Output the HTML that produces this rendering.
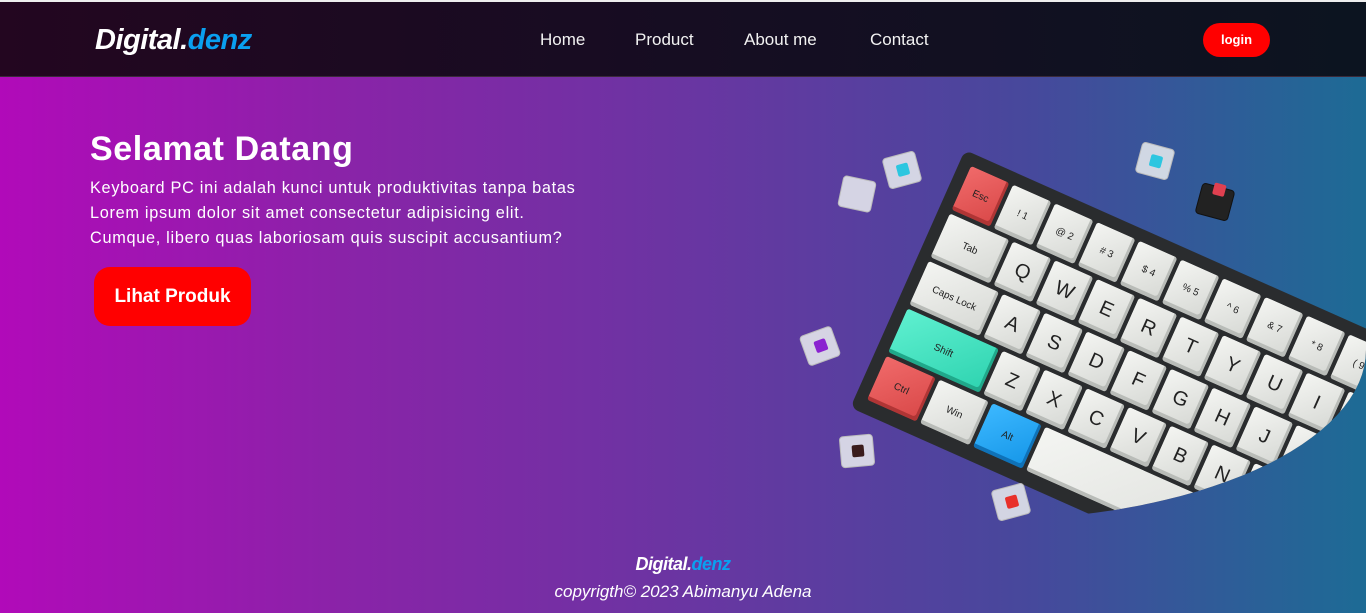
<!DOCTYPE html>
<html><head><meta charset="utf-8"><style>
*{margin:0;padding:0;box-sizing:border-box}
html{width:1366px;height:613px;overflow:hidden}
body{width:1366px;height:613px;overflow:hidden;font-family:"Liberation Sans",sans-serif;color:#fff;position:relative;
background:linear-gradient(90deg,#b10ab9 0%,#8a23a8 25%,#6a35a2 50%,#47489c 75%,#1d6b95 100%);border-top:2px solid #eee}
nav{position:absolute;left:0;top:0;width:1366px;height:75px;background:linear-gradient(90deg,#230620,#160d22 50%,#0c1420);border-bottom:1px solid #3a2a3a}
.logo{position:absolute;font-weight:bold;font-style:italic;letter-spacing:-0.5px}
.logo span{color:#0aa0f0}
.nl{position:absolute;top:28px;font-size:17px;color:#f2f2f2}
.login{position:absolute;left:1203px;top:21px;width:67px;height:34px;border-radius:17px;background:#ff0000;font-weight:bold;font-size:13px;text-align:center;line-height:34px}
h1{position:absolute;left:90px;top:128px;font-size:34px;font-weight:bold;letter-spacing:0.6px}
p.d{position:absolute;left:90px;top:174px;font-size:16.3px;line-height:25px;letter-spacing:0.7px;white-space:nowrap}
.btn{position:absolute;left:94px;top:265px;width:157px;height:59px;border-radius:16px;background:#ff0000;font-weight:bold;font-size:19px;text-align:center;line-height:59px}
.wrap{position:absolute;left:780px;top:100px;width:586px;height:418px;overflow:hidden;border-bottom-right-radius:380px 170px}
.case{position:absolute;left:185px;top:48px;width:720px;height:282px;background:#2a2c2e;border-radius:8px;transform:rotate(24deg);transform-origin:0 0;padding:10px}
.row{display:flex;height:52px}
.k{width:46px;height:52px;border:2px solid #2a2c2e;border-radius:5px;background:linear-gradient(135deg,#f4f5f2,#d6d8d4);color:#222;font-size:20px;display:flex;align-items:center;justify-content:center;box-shadow:inset -3px -4px 0 #b9bcb8}
.s{font-size:10px}
.r{background:linear-gradient(135deg,#f06a6a,#d94848);box-shadow:inset -3px -4px 0 #b03535}
.t{background:linear-gradient(135deg,#5ff0d0,#2ed3b0);box-shadow:inset -3px -4px 0 #20a88a}
.b{background:linear-gradient(135deg,#3cb8ff,#1596e8);box-shadow:inset -3px -4px 0 #0f72b8}
.sw{position:absolute;width:34px;height:32px;background:rgba(235,238,240,.85);border:1px solid #bbb;border-radius:4px}
.sw i{position:absolute;left:11px;top:9px;width:12px;height:12px;border-radius:2px}
.f1{position:absolute;left:0;width:1366px;text-align:center;top:552px;font-size:18px}
.f2{position:absolute;left:0;width:1366px;text-align:center;top:580px;font-size:17px;font-style:italic}
</style></head><body>
<nav>
<div class="logo" style="left:95px;top:22px;font-size:29px">Digital.<span>denz</span></div>
<div class="nl" style="left:540px">Home</div>
<div class="nl" style="left:635px">Product</div>
<div class="nl" style="left:744px">About me</div>
<div class="nl" style="left:870px">Contact</div>
<div class="login">login</div>
</nav>
<h1>Selamat Datang</h1>
<p class="d">Keyboard PC ini adalah kunci untuk produktivitas tanpa batas<br>Lorem ipsum dolor sit amet consectetur adipisicing elit.<br>Cumque, libero quas laboriosam quis suscipit accusantium?</p>
<div class="btn">Lihat Produk</div>
<div class="wrap">
<div class="case">
<div class="row"><div class="k r s">Esc</div><div class="k s">! 1</div><div class="k s">@ 2</div><div class="k s"># 3</div><div class="k s">$ 4</div><div class="k s">% 5</div><div class="k s">^ 6</div><div class="k s">&amp; 7</div><div class="k s">* 8</div><div class="k s">( 9</div><div class="k s">) 0</div><div class="k"></div><div class="k"></div><div class="k"></div></div>
<div class="row"><div class="k s" style="width:69px">Tab</div><div class="k">Q</div><div class="k">W</div><div class="k">E</div><div class="k">R</div><div class="k">T</div><div class="k">Y</div><div class="k">U</div><div class="k">I</div><div class="k">O</div><div class="k">P</div><div class="k"></div><div class="k"></div></div>
<div class="row"><div class="k s" style="width:81px">Caps Lock</div><div class="k">A</div><div class="k">S</div><div class="k">D</div><div class="k">F</div><div class="k">G</div><div class="k">H</div><div class="k">J</div><div class="k">K</div><div class="k">L</div><div class="k"></div><div class="k"></div></div>
<div class="row"><div class="k t s" style="width:104px">Shift</div><div class="k">Z</div><div class="k">X</div><div class="k">C</div><div class="k">V</div><div class="k">B</div><div class="k">N</div><div class="k">M</div><div class="k"></div><div class="k"></div><div class="k"></div></div>
<div class="row"><div class="k r s" style="width:58px">Ctrl</div><div class="k s" style="width:58px">Win</div><div class="k b s" style="width:58px">Alt</div><div class="k" style="width:288px"></div><div class="k"></div><div class="k"></div></div>
</div>
</div>
<div class="sw" style="left:885px;top:152px;transform:rotate(-15deg)"><i style="background:#2cc6e0"></i></div>
<div class="sw" style="left:840px;top:176px;transform:rotate(12deg)"></div>
<div class="sw" style="left:1138px;top:143px;transform:rotate(15deg)"><i style="background:#2cc6e0"></i></div>
<div class="sw" style="left:1198px;top:184px;background:#222;border-color:#111;transform:rotate(15deg)"><i style="background:#e04050;top:-4px"></i></div>
<div class="sw" style="left:803px;top:328px;transform:rotate(-20deg)"><i style="background:#8a22d0"></i></div>
<div class="sw" style="left:840px;top:433px;transform:rotate(-5deg)"><i style="background:#3a1c1c"></i></div>
<div class="sw" style="left:994px;top:484px;transform:rotate(-15deg)"><i style="background:#e8302a"></i></div>
<div class="f1 logo">Digital.<span>denz</span></div>
<div class="f2">copyrigth© 2023 Abimanyu Adena</div>
</body></html>
